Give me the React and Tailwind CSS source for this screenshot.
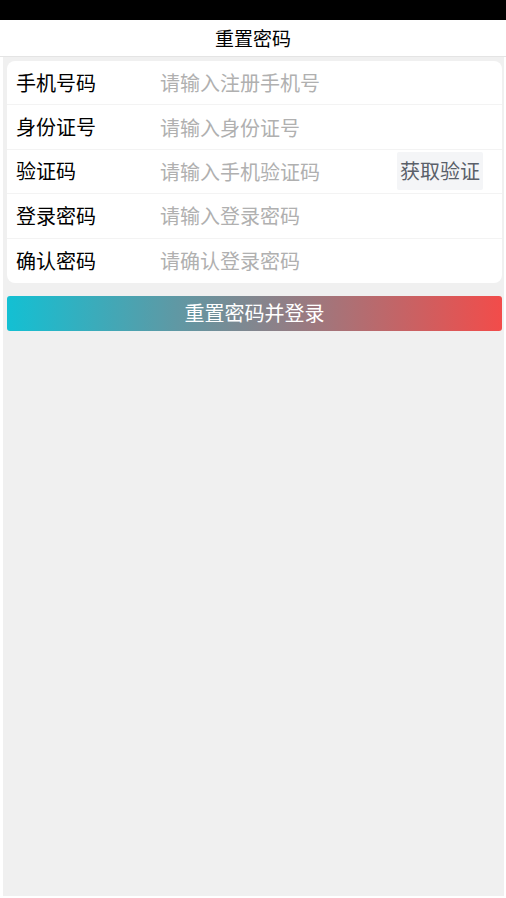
import React, { useState } from "react";

const fields = [
  { label: "手机号码", placeholder: "请输入注册手机号", type: "tel" },
  { label: "身份证号", placeholder: "请输入身份证号", type: "text" },
  { label: "验证码", placeholder: "请输入手机验证码", type: "text", code: true },
  { label: "登录密码", placeholder: "请输入登录密码", type: "password" },
  { label: "确认密码", placeholder: "请确认登录密码", type: "password" },
];

const ResetPassword = () => {
  const [values, setValues] = useState({});

  const handleChange = (key, val) => {
    setValues((prev) => ({ ...prev, [key]: val }));
  };

  return (
    <div
      className="w-full h-[898px] bg-white flex flex-col"
      style={{ fontFamily: '"Noto Sans CJK SC", "Noto Sans", sans-serif' }}
    >
      {/* Status bar */}
      <div className="h-[20px] bg-black shrink-0" />

      {/* Title */}
      <div className="h-[37px] shrink-0 flex items-center justify-center border-b border-[#e4e4e4]">
        <h1 className="text-[19px] text-black leading-none -mt-[2px]">重置密码</h1>
      </div>

      {/* Body */}
      <div className="flex-1 ml-[3px] mr-[2px] mb-[2px] bg-[#f0f0f0] pl-[4px] pr-[2px] pt-[4px]">
        <div className="bg-white rounded-[8px] overflow-hidden">
          {fields.map((f, i) => (
            <div
              key={f.label}
              className={`h-[44.4px] flex items-center pl-[9px] pr-[19px] ${i < fields.length - 1 ? "border-b border-[#f3f3f3]" : ""}`}
            >
              <span className="w-[144px] shrink-0 text-[20px] text-black leading-none">{f.label}</span>
              <input
                type={f.type}
                value={values[f.label] || ""}
                onChange={(e) => handleChange(f.label, e.target.value)}
                placeholder={f.placeholder}
                className="flex-1 min-w-0 text-[20px] leading-none bg-transparent outline-none placeholder:text-[#b0b0b0]"
              />
              {f.code && (
                <button className="h-[38px] px-[3px] bg-[#f4f5f7] rounded-[2px] text-[20px] text-[#5a5f69] leading-none">
                  获取验证
                </button>
              )}
            </div>
          ))}
        </div>

        <button className="mt-[13px] w-full h-[35px] rounded-[3px] bg-[linear-gradient(to_right,#13c0d3,#f24c4a)] text-white text-[20px] leading-none">
          重置密码并登录
        </button>
      </div>
    </div>
  );
};

export default function App() {
  return <ResetPassword />;
}
